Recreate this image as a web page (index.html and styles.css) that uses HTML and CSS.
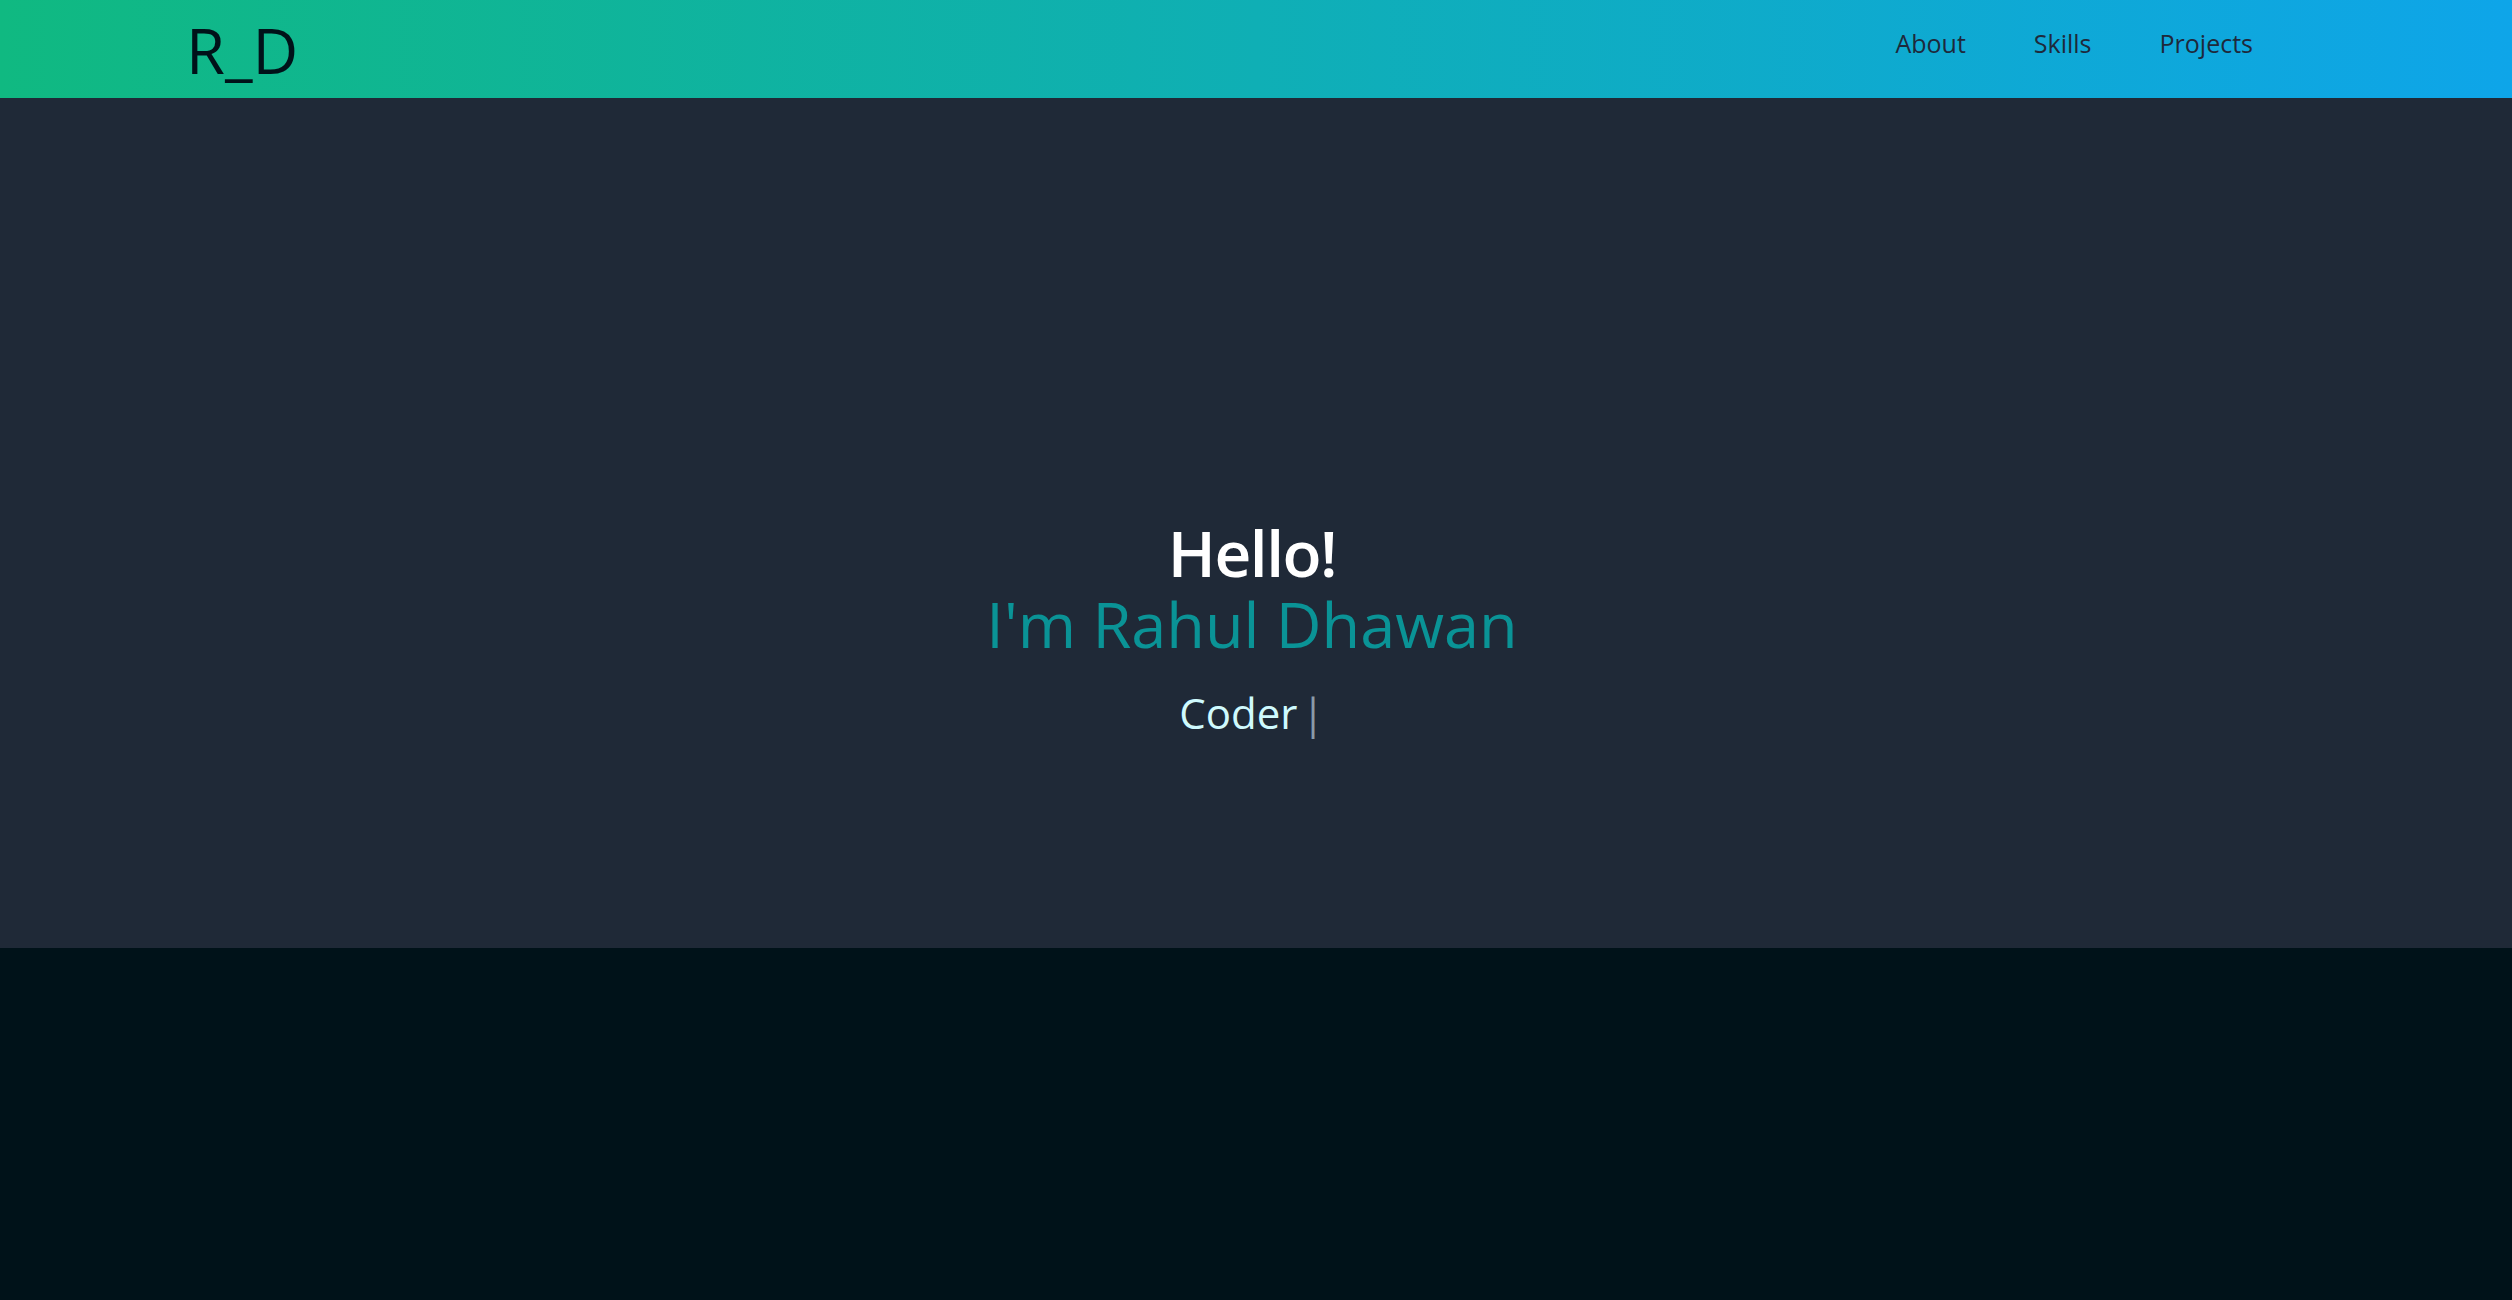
FILE: index.html
```html
<!DOCTYPE html>
<html lang="en">
<head>
<meta charset="utf-8">
<title>Rahul Dhawan</title>
<link rel="stylesheet" href="styles.css">
</head>
<body>
<header class="topbar">
  <a class="logo" href="#">R_D</a>
  <nav class="nav">
    <a class="nav-link" href="#about">About</a>
    <a class="nav-link" href="#skills">Skills</a>
    <a class="nav-link" href="#projects">Projects</a>
  </nav>
</header>
<section class="hero">
  <div class="hero-inner">
    <h1 class="hello">Hello!</h1>
    <h2 class="name">I'm Rahul Dhawan</h2>
    <p class="role">Coder<span class="cursor">|</span></p>
  </div>
</section>
<section class="below"></section>
</body>
</html>
```
FILE: styles.css
```css
* { box-sizing: border-box; }
html, body { margin: 0; padding: 0; }
body {
  font-family: "Open Sans", "Noto Sans", sans-serif;
  background: #001219;
  min-height: 100vh;
}
.topbar {
  height: 98px;
  display: flex;
  align-items: center;
  justify-content: space-between;
  padding: 0 259px 0 186px;
  background: linear-gradient(to right, #10b981, #0ea5e9);
}
.logo {
  font-size: 63px;
  line-height: 1;
  color: #001219;
  text-decoration: none;
}
.nav {
  display: flex;
  gap: 68px;
  margin-bottom: 13px;
}
.nav-link {
  font-size: 25px;
  color: #1e293b;
  text-decoration: none;
}
.hero {
  height: 850px;
  background: #1f2937;
  display: flex;
  align-items: center;
  justify-content: center;
  padding-right: 8px;
  padding-top: 214px;
}
.hero-inner {
  text-align: center;
}
.hello {
  margin: 0;
  font-size: 64px;
  line-height: 71px;
  font-weight: 600;
  letter-spacing: -1.5px;
  color: #ffffff;
}
.name {
  margin: 0;
  font-size: 63px;
  line-height: 71px;
  font-weight: 400;
  color: #0a9396;
}
.role {
  margin: 24px 0 0;
  font-size: 42px;
  line-height: 60px;
  color: #cffafe;
}
.cursor {
  color: #8a9ba8;
  margin-left: 4px;
}
.below {
  height: 352px;
  background: #001219;
}
```
